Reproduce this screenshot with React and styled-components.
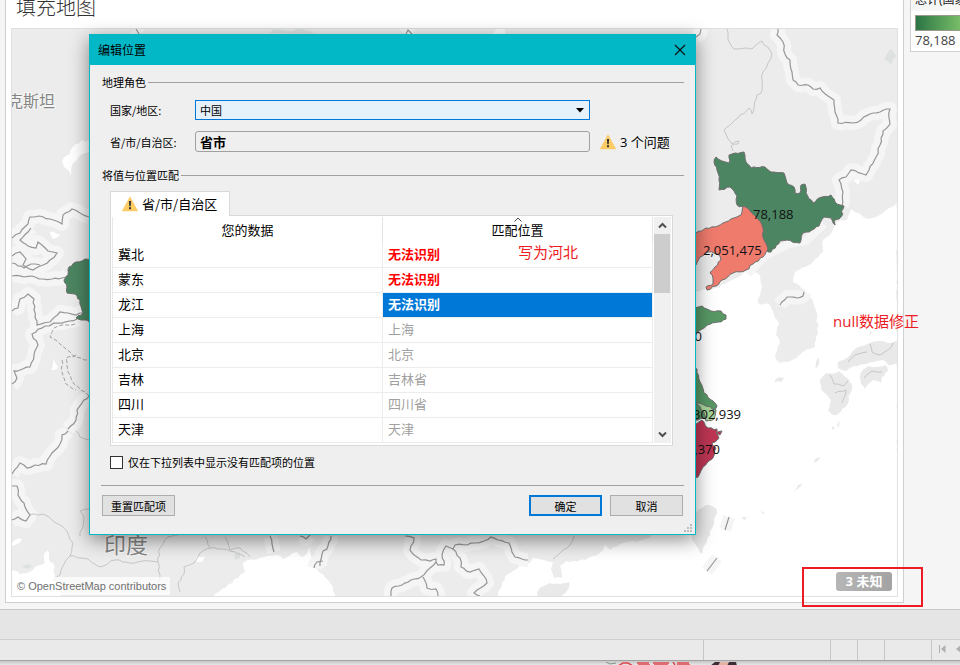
import React from 'react';
import styled, { createGlobalStyle, css } from 'styled-components';

const GlobalStyle = createGlobalStyle`
  *, *::before, *::after { box-sizing: border-box; }
  body {
    margin: 0;
    background: #dedede;
    color: #111;
    font-family: "Open Sans", "Noto Sans CJK SC", sans-serif;
    font-size: 13px;
  }
  button, input, select { font-family: inherit; margin: 0; }
`;

/* ---------- workbook shell ---------- */

const Page = styled.div`
  position: relative;
  display: flex;
  flex-direction: column;
  min-height: 100vh;
  overflow: hidden;
`;

const Workspace = styled.main`
  flex: 1;
  display: flex;
  padding: 0 0 6px 5px;
  background: #f5f5f5;
`;

const Sheet = styled.section`
  flex: 1;
  min-width: 0;
  display: flex;
  flex-direction: column;
  padding: 0 5px 5px;
  background: #fff;
  border: 1px solid #cfcfcf;
  border-top: 0;
`;

const SheetTitle = styled.h1`
  margin: 0;
  height: 28px;
  padding-left: 5px;
  font-family: "Noto Sans CJK SC", sans-serif;
  font-size: 20px;
  font-weight: 300;
  line-height: 13px;
  color: #333;
`;

const MapFrame = styled.div`
  position: relative;
  flex: 1;
  min-height: 320px;
  border: 1px solid #e0e0e0;
  overflow: hidden;
`;

const MapCanvas = styled.svg`
  position: absolute;
  inset: 0;
  width: 100%;
  height: 100%;
  display: block;
`;

const Attribution = styled.small`
  position: absolute;
  left: 0;
  bottom: 1px;
  padding: 0 4px 0 5px;
  background: rgba(255, 255, 255, 0.75);
  color: #707070;
  font: 11px/18px "Liberation Sans", sans-serif;
`;

const UnknownBadge = styled.button`
  position: absolute;
  right: 5px;
  bottom: 5px;
  width: 56px;
  height: 19px;
  padding: 0;
  border: 0;
  border-radius: 3px;
  background: linear-gradient(90deg, #b6b6b6, #a3a3a3);
  color: #fff;
  font-size: 13px;
  font-weight: 700;
  line-height: 19px;
`;

const LegendColumn = styled.aside`
  flex: 0 0 56px;
  padding-left: 6px;
  overflow: hidden;
`;

const LegendCard = styled.div`
  height: 52px;
  border: solid #cfcfcf;
  border-width: 0 0 1px 1px;
  background: #fff;
`;

const LegendTitle = styled.h2`
  margin: 0;
  height: 11px;
  padding-left: 4px;
  background: #f7f7f7;
  font-size: 12px;
  font-weight: 400;
  line-height: 0;
  white-space: nowrap;
  color: #222;
`;

const LegendRamp = styled.div`
  height: 16px;
  margin: 4px 0 0 4px;
  border: 1px solid #9a9a8a;
  border-right: 0;
  background: linear-gradient(90deg, #2b7545, #78bd68);
`;

const LegendValue = styled.p`
  margin: 0;
  padding-left: 4px;
  line-height: 18px;
  color: #444;
`;

const Shelf = styled.div`
  height: 30px;
  background: #e5e5e5;
  border-top: 1px solid #c8c8c8;
`;

const StatusBar = styled.footer`
  display: flex;
  height: 22px;
  background: #eaeaea;
  border-top: 1px solid #cfcfcf;
  border-bottom: 1px solid #a4a4a4;
`;

const StatusCell = styled.div`
  flex: ${(p) => (p.$width ? `0 0 ${p.$width}px` : '1')};
  border-left: ${(p) => (p.$width ? '1px solid #c6c6c6' : '0')};
  overflow: hidden;
`;

const PageNav = styled.div`
  display: flex;
  gap: 7px;
  padding: 5px 0 0 7px;
`;

const NavButton = styled.button`
  flex: none;
  padding: 0;
  border: 0;
  background: none;
  line-height: 0;
`;

const Desktop = styled.div`
  height: 4px;
  padding-left: 604px;
  overflow: hidden;
  background: linear-gradient(#c6c6c6, #e6e6e6);
  line-height: 0;
`;

/* ---------- dialog ---------- */

const Dialog = styled.section`
  position: absolute;
  left: 89px;
  top: 34px;
  width: 607px;
  border: 1px solid #00b7c3;
  background: #efefef;
  box-shadow: 0 5px 18px rgba(0, 0, 0, 0.45);
  font-family: "Noto Sans CJK SC", sans-serif;
  color: #000;
`;

const TitleBar = styled.header`
  display: flex;
  align-items: center;
  justify-content: space-between;
  height: 30px;
  padding: 0 9px 1px 8px;
  background: #02b7c6;
`;

const DialogTitle = styled.h2`
  margin: 0;
  font-size: 12px;
  font-weight: 400;
  line-height: 16px;
`;

const CloseButton = styled.button`
  padding: 0;
  border: 0;
  background: none;
  line-height: 0;
`;

const Body = styled.form`
  padding: 9px 11px 18px 12px;
`;

const Legend = styled.h3`
  display: flex;
  align-items: center;
  gap: 2px;
  margin: 0;
  font-size: 11px;
  font-weight: 400;
  line-height: 16px;
  &::after {
    content: '';
    flex: 1;
    height: 1px;
    background: #a0a0a0;
  }
`;

const Fields = styled.div`
  display: grid;
  grid-template-columns: 85px 1fr 94px;
  row-gap: 11px;
  align-items: center;
  margin: 10px 0 15px;
  padding-left: 8px;
`;

const FieldLabel = styled.label`
  font-size: 11px;
  line-height: 16px;
`;

const SelectBox = styled.span`
  position: relative;
  display: block;
  height: 20px;
`;

const Select = styled.select`
  display: block;
  width: 100%;
  height: 20px;
  padding: 0 4px;
  appearance: none;
  border: 1px solid #0078d7;
  border-radius: 0;
  background: #e5f1fb;
  color: #000;
  font-size: 11px;
  line-height: 16px;
`;

const SelectArrow = styled.svg`
  position: absolute;
  right: 6px;
  top: 8px;
  pointer-events: none;
`;

const TextBox = styled.input`
  width: 100%;
  height: 21px;
  padding: 0 4px;
  border: 1px solid #a0a0a0;
  border-radius: 3px;
  background: #efefef;
  color: #000;
  font-size: 13px;
  font-weight: 700;
`;

const Issue = styled.span`
  display: flex;
  align-items: center;
  gap: 4px;
  padding-left: 10px;
  font-family: "Open Sans", "Noto Sans CJK SC", sans-serif;
  font-size: 13px;
  line-height: 20px;
  white-space: nowrap;
`;

const Tabs = styled.div`
  display: flex;
  margin: 8px 0 -1px 8px;
`;

const Tab = styled.button`
  position: relative;
  display: flex;
  align-items: center;
  gap: 4px;
  height: 25px;
  padding: 0 12px 0 11px;
  border: 1px solid #d9d9d9;
  border-bottom: 0;
  background: #fff;
  color: #000;
  font-size: 13px;
  line-height: 20px;
`;

const TableFrame = styled.div`
  display: flex;
  margin: 0 11px 0 8px;
  padding: 1px 1px 2px;
  border: 1px solid #d9d9d9;
  background: #fff;
`;

const Table = styled.table`
  flex: 1;
  width: 100%;
  table-layout: fixed;
  border-collapse: separate;
  border-spacing: 0;
  border-left: 1px solid #e8e8e8;
  font-size: 13px;
  line-height: 20px;
`;

const HeadCell = styled.th`
  position: relative;
  width: 50%;
  height: 26px;
  padding: 0;
  border-right: 1px solid #e4e4e4;
  font-weight: 400;
  text-align: center;
`;

const SortMark = styled.svg`
  position: absolute;
  left: 50%;
  top: 0;
  margin-left: -4px;
`;

const tones = {
  plain: css`color: #000;`,
  muted: css`color: #a0a0a0;`,
  error: css`color: #f00; font-weight: 700;`,
  selected: css`color: #fff; font-weight: 700; background: #0078d7; background-clip: padding-box;`,
};

const Cell = styled.td`
  height: 25px;
  padding: 0 5px 2px;
  border-right: 1px solid #ececec;
  border-bottom: 1px solid #ececec;
  ${(p) => tones[p.$tone]}
`;

const ScrollBar = styled.div`
  flex: none;
  display: flex;
  flex-direction: column;
  width: 17px;
  margin-left: 1px;
  padding-right: 1px;
  background: #f0f0f0;
`;

const ScrollButton = styled.button`
  height: 17px;
  padding: 0;
  border: 0;
  background: none;
  line-height: 0;
`;

const ScrollTrack = styled.div`
  flex: 1;
`;

const ScrollThumb = styled.div`
  height: 59px;
  background: #cdcdcd;
`;

const CheckLabel = styled.label`
  display: flex;
  align-items: center;
  gap: 5px;
  margin: 8px 0 15px 8px;
  font-size: 11px;
  line-height: 16px;
`;

const CheckBox = styled.input`
  appearance: none;
  width: 13px;
  height: 13px;
  border: 1px solid #333;
  background: #fff;
  &:checked { background: #0078d7; }
`;

const Footer = styled.div`
  display: flex;
  gap: 8px;
  margin-left: -1px;
  padding: 9px 1px 0;
  border-top: 1px solid #a0a0a0;
`;

const PushButton = styled.button`
  width: 73px;
  height: 21px;
  padding: 0;
  border: ${(p) => (p.$primary ? '2px solid #0078d7' : '1px solid #adadad')};
  background: #e1e1e1;
  color: #000;
  font-size: 11px;
  line-height: 16px;
  margin-right: ${(p) => (p.$apart ? 'auto' : '0')};
`;

const ResizeGrip = styled.svg`
  position: absolute;
  right: 3px;
  bottom: 2px;
`;

/* ---------- annotations over the page ---------- */

const Note = styled.p`
  position: absolute;
  left: ${(p) => p.$x}px;
  top: ${(p) => p.$y}px;
  margin: 0;
  color: #ed1c24;
  font-size: 15px;
  line-height: 20px;
  white-space: nowrap;
`;

const Highlight = styled.div`
  position: absolute;
  right: 37px;
  bottom: 58px;
  width: 121px;
  height: 40px;
  border: 2px solid #ed1c24;
  pointer-events: none;
`;

/* ---------- map drawing ---------- */

// Turns a coarse outline into a slightly ragged one, like a coast or border.
function ragged(points, amount = 1.3, closed = false, step = 4) {
  const nums = points.trim().split(/[\s,]+/).map(Number);
  const pts = [];
  for (let i = 0; i < nums.length; i += 2) pts.push([nums[i], nums[i + 1]]);
  if (closed) pts.push(pts[0]);
  let seed = Math.round(nums[0] * 31 + nums[1] * 17) || 7;
  const next = () => {
    seed = (seed * 16807) % 2147483647;
    return seed / 2147483647 - 0.5;
  };
  let d = `M${pts[0][0]} ${pts[0][1]}`;
  for (let i = 1; i < pts.length; i += 1) {
    const [ax, ay] = pts[i - 1];
    const [bx, by] = pts[i];
    const len = Math.hypot(bx - ax, by - ay);
    const n = Math.max(1, Math.round(len / step));
    for (let k = 1; k < n; k += 1) {
      const t = k / n;
      const off = next() * 2 * amount;
      const x = ax + (bx - ax) * t - ((by - ay) / len) * off;
      const y = ay + (by - ay) * t + ((bx - ax) / len) * off;
      d += `L${x.toFixed(1)} ${y.toFixed(1)}`;
    }
    d += `L${bx} ${by}`;
  }
  return closed ? `${d}Z` : d;
}

const seas = [
  '897,203 880,215 867,219 855,212 851,209 847,220 837,222 832,232 823,240 823,252 813,262 795,272 793,282 805,290 813,300 817,313 818,333 815,347 803,352 792,360 780,363 775,357 780,343 776,335 779,324 775,318 770,305 758,303 762,287 760,275 752,270 748,271 715,288 690,292 690,480 690,500 700,520 660,532 645,539 628,542 610,550 605,545 600,553 585,560 566,561 560,566 562,578 554,578 551,569 553,562 533,558 530,563 520,565 510,573 505,577 502,583 498,597 898,597',
  '213,597 222,589 238,578 245,572 243,563 247,560 260,558 277,555 283,559 297,552 303,557 310,547 312,558 320,573 328,580 333,587 335,597',
  '12,570 20,574 27,573 36,566 45,563 44,554 48,550 50,562 53,563 55,575 53,580 60,584 60,597 12,597',
  '89,141 82,140 72,148 70,154 62,161 64,167 68,170 71,177 72,165 77,160 82,154 89,152',
  '12,543 20,538 22,540 15,545 12,546',
  '50,232 60,234 58,237 53,239',
  '53,359 56,364 58,368 51,370',
  '853,180 862,179 858,185',
  '195,558 205,556 203,561 197,562',
].map((p) => ragged(p, 1.2, true, 4));

const islands = [
  '706,505 712,506 717,510 714,524 707,540 703,548 702,554 698,548 692,540 691,525 697,512',
  '537,593 541,587 549,583 560,584 569,582 569,588 562,597 538,597',
  '775,380 780,377 785,378 781,382 775,382',
  '898,340 888,343 878,341 867,344 856,348 848,357 838,362 838,368 846,371 855,366 866,364 877,361 883,360 888,365 898,364',
  '862,371 868,366 878,367 885,365 888,371 882,377 881,383 873,380 865,389 861,384 860,376',
  '820,380 826,373 836,373 839,371 847,378 852,384 850,394 847,405 837,415 833,415 828,410 831,400 826,394 821,389',
  '819,358 818,366 815,369 816,362',
  '815,459 821,457 818,461 814,463',
  '798,485 794,492 799,488 803,483',
  '837,426 840,421 839,427',
  '741,518 747,517 745,520',
  '761,511 765,513 762,514',
  '870,331 872,332 869,336',
  '832,426 835,428 832,430',
].map((p) => ragged(p, 0.9, true, 3));

const nationalBorders = [
  '778,29 777,35 783,42 785,54 790,60 792,72 793,80 798,85 808,85 813,89 820,88 828,96 834,100 835,112 838,123 853,123 861,120 870,114 880,112 890,109 889,118 890,124 883,131 880,145 876,157 869,170 866,175 851,170 846,177 839,180 843,192 842,206',
  '696,37 700,34 701,29',
  '12,238 20,233 28,224 30,217 39,216 50,219 62,224 63,215 72,209 80,213 89,217',
  '12,256 20,252 26,259 23,265 33,270 43,265 50,260 57,253 48,251 38,242 36,248 28,246 20,240 28,232 31,228',
  '12,276 24,277 32,276 43,279 52,279 62,278 68,275',
  '12,263 18,266 24,268 31,264 40,265',
  '12,311 18,308 20,299 28,294 34,299 34,310 37,325 50,322 60,312 68,313 76,315 84,313',
  '77,319 58,323 45,326 32,334 38,345 34,355 30,367 20,370 14,371 17,378 12,384',
  '89,396 84,400 77,410 76,420 68,429',
  '68,431 62,435 60,444 52,453 46,464 35,465 27,468 20,463 12,474',
  '12,486 17,486 18,495 24,503 30,515 26,521 18,517 12,520',
  '320,566 322,554 328,546 331,536',
  '405,536 414,538 410,550 413,554 421,560 430,561 436,559 438,565 444,565 442,555 446,546 453,549 455,545 467,545 475,543 484,541 491,537 498,540 509,543 512,552 515,557 522,559 528,560',
  '391,596 392,588 402,585 411,580 421,577 430,568 436,562',
  '453,549 460,558 461,567 470,572 479,569 484,576 487,583 477,590 474,593 480,596',
  '423,577 427,588 436,589 438,596',
  '780,305 787,297 797,298 803,296 804,292',
  '270,536 272,544 274,552',
  '300,536 306,539 310,535',
  '314,568 317,562 323,561',
  '406,34 408,30 412,34',
  '136,29 139,34',
].map((p) => ragged(p, 1, false, 4));

const minorBorders = [
  '727,29 728,40 734,49 745,48 752,49 762,41 772,54 768,63 763,72 761,93 757,95 752,114 749,108 738,118 724,130 728,139 732,144 739,141 738,144 731,146 733,151',
  '30,515 42,514 52,520 62,526 67,531 73,543 70,556 66,560 60,575 54,580',
  '80,536 84,518 80,511 89,509',
  '70,556 88,559 100,567 115,560 130,563 150,561 158,562 160,548 168,537 178,535',
  '205,537 210,548 200,553 194,563 184,567 184,574 178,583 180,592',
  '210,548 222,549 235,552 245,557',
  '225,537 230,550 240,548 250,557',
  '158,562 160,575 155,590',
  '574,536 570,545 563,550 553,559',
  '76,431 80,437 89,440',
  '830,375 834,384 843,386 848,381',
  '870,344 872,352 880,355 888,350 893,343',
  '848,362 855,355 867,352',
  '864,378 872,371 882,372',
  '835,393 846,390 842,403',
].map((p) => ragged(p, 1, false, 4));

const disputed = [
  '75,324 62,325 54,328 50,337 60,344 70,352 76,357 89,360',
  '76,355 66,358 68,372 74,384 85,392 89,396',
  '62,360 62,372 66,384 76,390',
].map((p) => ragged(p, 1, false, 4));

const provinces = [
  { fill: '#4c8561', d: '714,162 716,157 722,161 729,163 729,155 735,153 744,152 746,162 751,168 765,167 771,172 784,173 787,183 794,187 795,193 800,193 801,185 805,184 806,193 813,203 822,197 831,195 837,204 844,206 841,217 834,221 835,225 831,218 824,217 819,226 812,230 803,233 800,243 787,240 780,241 771,252 763,250 750,210 737,205 737,196 730,187 719,190 719,180 718,173' },
  { fill: '#ef7b6d', d: '690,240 696,233 706,228 715,227 723,223 731,219 741,215 743,206 750,211 756,217 762,225 764,240 768,249 763,257 753,264 746,270 733,273 722,280 716,286 707,290 706,287 713,284 713,278 710,273 715,267 721,260 718,254 708,252 700,257 696,265 690,268' },
  { fill: '#579865', d: '690,309 702,306 711,311 721,311 726,315 726,319 718,322 707,325 699,331 690,338' },
  { fill: '#4c8561', d: '92,258 85,259 76,262 69,267 68,275 64,280 67,287 67,293 75,294 80,300 83,313 76,318 84,320 92,323' },
  { fill: '#579865', d: '690,365 697,369 700,382 704,393 713,401 717,406 715,410 704,405 696,402 690,402' },
  { fill: '#a7d69a', d: '696,403 704,405 716,410 714,419 706,421 703,413 698,408' },
  { fill: '#579865', d: '690,402 698,405 704,412 706,418 698,420 690,420' },
  { fill: '#be3654', d: '690,427 696,424 702,420 708,428 717,429 719,438 712,443 716,448 713,458 707,463 702,469 698,477 690,482' },
  { fill: '#be3654', d: '716,433 722,431 720,435' },
].map((p) => ({ ...p, d: ragged(p.d, 1, true, 3) }));

function WorldMap() {
  return (
    <MapCanvas viewBox="12 29 885 567" preserveAspectRatio="xMidYMid slice" role="img" aria-label="填充地图">
      <rect x="-500" y="-500" width="2000" height="2000" fill="#ececec" />
      {seas.map((d) => <path key={d} d={d} fill="#fff" />)}
      {islands.map((d) => <path key={d} d={d} fill="#e9e9e9" />)}
      <g fill="#dde2e1">
        <path d="M887 54l3-5 3 2 3 5-3 4-2 5-3-4-4-1z" />
        <path d="M22 567l5-3 5 2-4 3z" />
        <path d="M234 554l6-2 0 6-5 2z" />
        <path d="M270 33l3-4 20 2 5-3 12 3 4 3z" />
      </g>
      <path d="M492 34l5-5h8v5z" fill="#fafafa" />
      <g fill="none" stroke="#f5f5f5" strokeWidth="14" strokeLinejoin="round" strokeLinecap="butt">
        {nationalBorders.map((d) => <path key={d} d={d} />)}
        <path d="M748 274l17-18 24-12 17-3 18-17" strokeWidth="8" />
        <path d="M725 530l4-13M707 571l10-13" strokeWidth="12" />
      </g>
      <g fill="none" stroke="#c6c6c6" strokeWidth="1">
        {minorBorders.map((d) => <path key={d} d={d} />)}
      </g>
      <g fill="none" stroke="#969696" strokeWidth="1.2">
        {nationalBorders.map((d) => <path key={d} d={d} />)}
        <path d="M725 530l4-13M707 571l10-13" />
      </g>
      <g fill="none" stroke="#a2a2a2" strokeDasharray="4 2">
        {disputed.map((d) => <path key={d} d={d} />)}
      </g>
      {provinces.map((p) => (
        <path key={p.d} d={p.d} fill={p.fill} stroke="#6e6e6e" strokeLinejoin="round" />
      ))}
      <g fill="#858585" stroke="#f6f6f6" strokeWidth="2" paintOrder="stroke" fontFamily="'Noto Sans CJK SC', sans-serif">
        <text x="55" y="107" fontSize="16" textAnchor="end">克斯坦</text>
        <text x="104" y="553" fontSize="22">印度</text>
      </g>
      <g fill="#111" fontFamily="'Open Sans', sans-serif" fontSize="13">
        <text x="753" y="219">78,188</text>
        <text x="703" y="255">2,051,475</text>
        <text x="741" y="419" textAnchor="end">302,939</text>
        <text x="720" y="454" textAnchor="end">1,370</text>
        <text x="702" y="341" textAnchor="end">0</text>
      </g>
    </MapCanvas>
  );
}

function WarningIcon() {
  return (
    <svg width="16" height="16" viewBox="0 0 16 16" aria-hidden="true">
      <path d="M8 0.8L15.8 15H0.2Z" fill="#ffcb63" stroke="#f5c566" strokeWidth="0.4" strokeLinejoin="round" />
      <path d="M6.9 5h2.2l-.4 5.2H7.3z" fill="#333" />
      <rect x="7" y="11.2" width="2" height="2" fill="#333" />
    </svg>
  );
}

function Chevron({ down }) {
  return (
    <svg width="9" height="7" viewBox="0 0 9 7" aria-hidden="true">
      <path d={down ? 'M1 1.5l3.5 3.5L8 1.5' : 'M1 5.5L4.5 2 8 5.5'} fill="none" stroke="#505050" strokeWidth="2" />
    </svg>
  );
}

const rows = [
  ['冀北', '无法识别', 'error'],
  ['蒙东', '无法识别', 'error'],
  ['龙江', '无法识别', 'selected'],
  ['上海', '上海', 'muted'],
  ['北京', '北京', 'muted'],
  ['吉林', '吉林省', 'muted'],
  ['四川', '四川省', 'muted'],
  ['天津', '天津', 'muted'],
];

function EditLocations() {
  return (
    <Dialog role="dialog" aria-labelledby="dialog-title">
      <TitleBar>
        <DialogTitle id="dialog-title">编辑位置</DialogTitle>
        <CloseButton type="button" aria-label="关闭">
          <svg width="12" height="12" viewBox="0 0 12 12">
            <path d="M1 1l10 10M11 1L1 11" stroke="#111" strokeWidth="1.2" />
          </svg>
        </CloseButton>
      </TitleBar>
      <Body onSubmit={(e) => e.preventDefault()}>
        <Legend>地理角色</Legend>
        <Fields>
          <FieldLabel htmlFor="country">国家/地区:</FieldLabel>
          <SelectBox>
            <Select id="country" defaultValue="中国">
              <option>中国</option>
            </Select>
            <SelectArrow width="8" height="5" viewBox="0 0 8 5" aria-hidden="true">
              <path d="M0 0h8L4 4.5z" fill="#000" />
            </SelectArrow>
          </SelectBox>
          <span />
          <FieldLabel htmlFor="province">省/市/自治区:</FieldLabel>
          <TextBox id="province" defaultValue="省市" />
          <Issue><WarningIcon />3 个问题</Issue>
        </Fields>
        <Legend>将值与位置匹配</Legend>
        <Tabs role="tablist">
          <Tab type="button" role="tab" aria-selected="true"><WarningIcon />省/市/自治区</Tab>
        </Tabs>
        <TableFrame>
          <Table>
            <thead>
              <tr>
                <HeadCell>您的数据</HeadCell>
                <HeadCell>
                  <SortMark width="8" height="5" viewBox="0 0 8 5" aria-hidden="true">
                    <path d="M.5 4.5L4 1l3.5 3.5" fill="none" stroke="#444" />
                  </SortMark>
                  匹配位置
                </HeadCell>
              </tr>
            </thead>
            <tbody>
              {rows.map(([name, match, tone]) => (
                <tr key={name}>
                  <Cell $tone="plain">{name}</Cell>
                  <Cell $tone={tone}>{match}</Cell>
                </tr>
              ))}
            </tbody>
          </Table>
          <ScrollBar>
            <ScrollButton type="button" aria-label="向上滚动"><Chevron /></ScrollButton>
            <ScrollTrack><ScrollThumb /></ScrollTrack>
            <ScrollButton type="button" aria-label="向下滚动"><Chevron down /></ScrollButton>
          </ScrollBar>
        </TableFrame>
        <CheckLabel>
          <CheckBox type="checkbox" />
          仅在下拉列表中显示没有匹配项的位置
        </CheckLabel>
        <Footer>
          <PushButton type="button" $apart>重置匹配项</PushButton>
          <PushButton type="submit" $primary>确定</PushButton>
          <PushButton type="button">取消</PushButton>
        </Footer>
      </Body>
      <ResizeGrip width="8" height="8" viewBox="0 0 8 8" aria-hidden="true">
        <path d="M6 0h2v2H6zM3 3h2v2H3zM6 3h2v2H6zM0 6h2v2H0zM3 6h2v2H3zM6 6h2v2H6z" fill="#bdbdbd" />
      </ResizeGrip>
    </Dialog>
  );
}

export default function App() {
  return (
    <>
      <GlobalStyle />
      <Page>
        <Workspace>
          <Sheet>
            <SheetTitle>填充地图</SheetTitle>
            <MapFrame>
              <WorldMap />
              <Attribution>© OpenStreetMap contributors</Attribution>
              <UnknownBadge type="button">3 未知</UnknownBadge>
            </MapFrame>
          </Sheet>
          <LegendColumn>
            <LegendCard>
              <LegendTitle>总计(国家)</LegendTitle>
              <LegendRamp />
              <LegendValue>78,188</LegendValue>
            </LegendCard>
          </LegendColumn>
        </Workspace>
        <Shelf />
        <StatusBar>
          <StatusCell />
          <StatusCell $width={127} />
          <StatusCell $width={27} />
          <StatusCell $width={27} />
          <StatusCell $width={47} />
          <StatusCell $width={29}>
            <PageNav>
              <NavButton type="button" aria-label="第一页">
                <svg width="8" height="8" viewBox="0 0 8 8"><path d="M0 0h1v8H0zM6.500 0v8L2 4z" fill="#b0b0b0" /></svg>
              </NavButton>
              <NavButton type="button" aria-label="上一页">
                <svg width="8" height="8" viewBox="0 0 8 8"><path d="M7 0v8L2 4z" fill="#b0b0b0" /></svg>
              </NavButton>
            </PageNav>
          </StatusCell>
        </StatusBar>
        <Desktop>
          <svg width="140" height="4" viewBox="0 0 140 4" aria-hidden="true">
            <path d="M2 0l4 2 6-1" stroke="#7b9484" fill="none" />
            <path d="M14 4l5-3 5 0 5 3M33 1h12M34 3h12M49 1h16M50 3h14M69 0l2 3M73 1h12M73 3h13" stroke="#e0474e" fill="none" strokeWidth="1.5" />
            <path d="M106 4l5-4h21l1 4z" fill="#3c2e38" />
            <path d="M114 4l2-4h9l-2 4z" fill="#e3b3a3" />
          </svg>
        </Desktop>
        <EditLocations />
        <Note $x={518} $y={242}>写为河北</Note>
        <Note $x={833} $y={311}>null数据修正</Note>
        <Highlight />
      </Page>
    </>
  );
}
